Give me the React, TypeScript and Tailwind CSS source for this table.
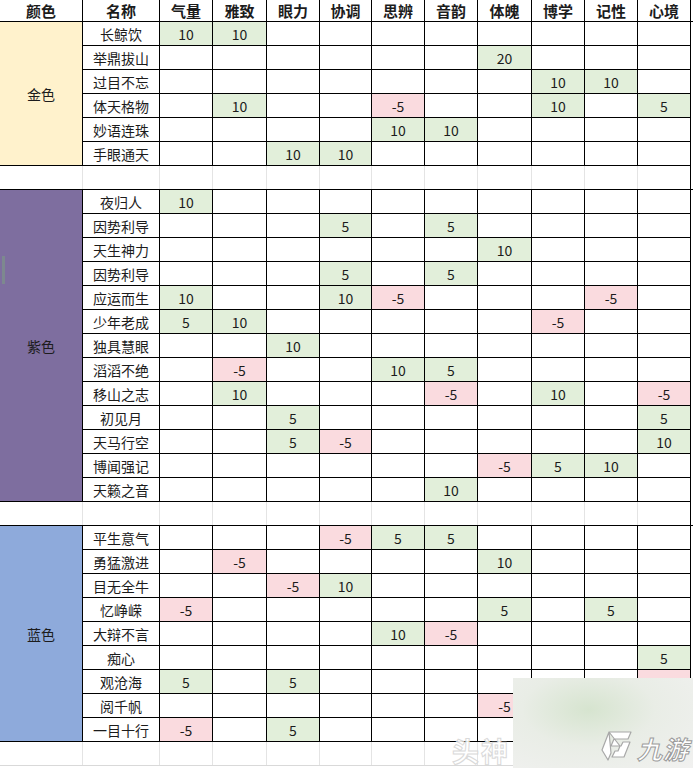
import React from "react"

const attrs = ["气量", "雅致", "眼力", "协调", "思辨", "音韵", "体魄", "博学", "记性", "心境"]

type Row = { name: string; vals: Record<string, number> }

const sections: { label: string; bg: string; rows: Row[] }[] = [
  {
    label: "金色",
    bg: "bg-[#fff2cc]",
    rows: [
      { name: "长鲸饮", vals: { 气量: 10, 雅致: 10 } },
      { name: "举鼎拔山", vals: { 体魄: 20 } },
      { name: "过目不忘", vals: { 博学: 10, 记性: 10 } },
      { name: "体天格物", vals: { 雅致: 10, 思辨: -5, 博学: 10, 心境: 5 } },
      { name: "妙语连珠", vals: { 思辨: 10, 音韵: 10 } },
      { name: "手眼通天", vals: { 眼力: 10, 协调: 10 } },
    ],
  },
  {
    label: "紫色",
    bg: "bg-[#7e6e9f]",
    rows: [
      { name: "夜归人", vals: { 气量: 10 } },
      { name: "因势利导", vals: { 协调: 5, 音韵: 5 } },
      { name: "天生神力", vals: { 体魄: 10 } },
      { name: "因势利导", vals: { 协调: 5, 音韵: 5 } },
      { name: "应运而生", vals: { 气量: 10, 协调: 10, 思辨: -5, 记性: -5 } },
      { name: "少年老成", vals: { 气量: 5, 雅致: 10, 博学: -5 } },
      { name: "独具慧眼", vals: { 眼力: 10 } },
      { name: "滔滔不绝", vals: { 雅致: -5, 思辨: 10, 音韵: 5 } },
      { name: "移山之志", vals: { 雅致: 10, 音韵: -5, 博学: 10, 心境: -5 } },
      { name: "初见月", vals: { 眼力: 5, 心境: 5 } },
      { name: "天马行空", vals: { 眼力: 5, 协调: -5, 心境: 10 } },
      { name: "博闻强记", vals: { 体魄: -5, 博学: 5, 记性: 10 } },
      { name: "天籁之音", vals: { 音韵: 10 } },
    ],
  },
  {
    label: "蓝色",
    bg: "bg-[#8eaadb]",
    rows: [
      { name: "平生意气", vals: { 协调: -5, 思辨: 5, 音韵: 5 } },
      { name: "勇猛激进", vals: { 雅致: -5, 体魄: 10 } },
      { name: "目无全牛", vals: { 眼力: -5, 协调: 10 } },
      { name: "忆峥嵘", vals: { 气量: -5, 体魄: 5, 记性: 5 } },
      { name: "大辩不言", vals: { 思辨: 10, 音韵: -5 } },
      { name: "痴心", vals: { 心境: 5 } },
      { name: "观沧海", vals: { 气量: 5, 眼力: 5, 心境: -5 } },
      { name: "阅千帆", vals: { 体魄: -5 } },
      { name: "一目十行", vals: { 气量: -5, 眼力: 5 } },
    ],
  },
]

const cols = "grid grid-cols-[83px_77px_53px_54px_53px_52px_53px_53px_54px_53px_53px_53px]"

function Spacer({ last }: { last?: boolean }) {
  return (
    <div className={`${cols} h-[24px] ${last ? "border-b border-[#d9d9d9]" : "border-b border-black"}`}>
      {Array.from({ length: 12 }).map((_, i) => (
        <div
          key={i}
          className={`border-r ${i === 11 && !last ? "border-black" : "border-[#e4e4e4]"}`}
        />
      ))}
    </div>
  )
}

function Section({ label, bg, rows }: { label: string; bg: string; rows: Row[] }) {
  return (
    <div className={cols}>
      <div
        className={`${bg} border-r border-b border-black flex items-center justify-center text-[14px]`}
        style={{ gridRow: `span ${rows.length} / span ${rows.length}` }}
      >
        {label}
      </div>
      {rows.map((r, ri) => (
        <React.Fragment key={ri}>
          <div className="h-[24px] border-r border-b border-black flex items-center justify-center text-[14px]">
            {r.name}
          </div>
          {attrs.map((a) => {
            const v = r.vals[a]
            const fill = v === undefined ? "" : v > 0 ? "bg-[#e2efda]" : "bg-[#fadbdf]"
            return (
              <div
                key={a}
                className={`h-[24px] border-r border-b border-black flex items-center justify-center text-[14px] ${fill}`}
              >
                {v}
              </div>
            )
          })}
        </React.Fragment>
      ))}
    </div>
  )
}

export default function App() {
  return (
    <div className="relative w-[693px] h-[768px] overflow-hidden bg-white text-[#1c1c1c] font-['Noto_Sans_CJK_SC','Microsoft_YaHei',sans-serif] leading-none">
      <div className={`${cols} h-[22px] border-b border-black`}>
        {["颜色", "名称", ...attrs].map((h) => (
          <div key={h} className="border-r border-black flex items-center justify-center font-bold text-[15px]">
            {h}
          </div>
        ))}
      </div>

      <Section {...sections[0]} />
      <Spacer />
      <Section {...sections[1]} />
      <Spacer />
      <Section {...sections[2]} />
      <Spacer last />

      {/* selection marker on the left edge */}
      <div className="absolute left-[2px] top-[256px] w-[3px] h-[28px] bg-[#7d9a86] opacity-60" />

      {/* faint watermark text */}
      <div className="absolute left-[452px] top-[737px] text-[27px] font-bold text-white opacity-90 [-webkit-text-stroke:1px_#d6d6d6] tracking-[2px]">
        头神
      </div>

      {/* blurred watermark box */}
      <div className="absolute left-[513px] top-[678px] w-[180px] h-[90px] bg-[radial-gradient(ellipse_at_42%_35%,#d6e4cf_0%,#e9ede6_45%,#f1f1f0_100%)] flex items-end justify-end pr-[4px] pb-[6px] gap-[4px]">
        <svg width="34" height="32" viewBox="0 0 34 32">
          <path
            d="M10 2 L32 2 L29 9 L15 9 L12 16 L22 16 L24 12 L31 12 L25 27 L13 27 L16 21 L19 21 L21 16 Z M10 2 L3 20 L9 30 L12 23 Z"
            fill="#ffffff"
            stroke="#a8a8a8"
            strokeWidth="1.2"
            strokeLinejoin="round"
          />
        </svg>
        <span className="text-[25px] leading-[28px] italic font-bold text-white [-webkit-text-stroke:1px_#9c9c9c] tracking-[1px]">
          九游
        </span>
      </div>
    </div>
  )
}
